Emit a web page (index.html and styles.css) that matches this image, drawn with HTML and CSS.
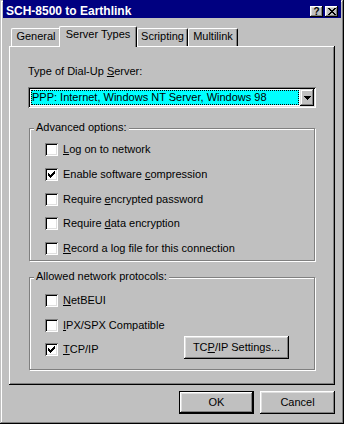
FILE: index.html
```html
<!DOCTYPE html>
<html lang="en">
<head>
  <meta charset="UTF-8">
  <meta name="viewport" content="width=device-width, initial-scale=1.0">
  <link rel="stylesheet" href="styles.css">
</head>
<body>
  <div class="window">
    <div class="titlebar">
      <span class="title">SCH-8500 to Earthlink</span>
      <div class="caption-buttons">
        <div class="cap-btn help">?</div>
        <div class="cap-btn close">
          <svg width="8" height="7" viewBox="0 0 8 7" shape-rendering="crispEdges">
            <path d="M0 0h2v1h-2z M6 0h2v1h-2z M1 1h2v1h-2z M5 1h2v1h-2z M2 2h4v1h-4z M3 3h2v1h-2z M2 4h4v1h-4z M1 5h2v1h-2z M5 5h2v1h-2z M0 6h2v1h-2z M6 6h2v1h-2z" fill="#000"/>
          </svg>
        </div>
      </div>
    </div>

    <div class="tabs">
      <div class="tab tab-general">General</div>
      <div class="tab tab-server active">Server Types</div>
      <div class="tab tab-scripting">Scripting</div>
      <div class="tab tab-multilink">Multilink</div>
    </div>

    <div class="panel">
      <div class="field-label">Type of Dial-Up <u>S</u>erver:</div>
      <div class="combo">
        <div class="combo-value">PPP: Internet, Windows NT Server, Windows 98</div>
        <div class="combo-arrow">
          <svg width="7" height="4" viewBox="0 0 7 4" shape-rendering="crispEdges">
            <path d="M0 0h7v1h-7z M1 1h5v1h-5z M2 2h3v1h-3z M3 3h1v1h-1z" fill="#000"/>
          </svg>
        </div>
      </div>

      <div class="group group-advanced">
        <span class="group-label">Advanced options:</span>
        <div class="check-row"><span class="check"></span><span><u>L</u>og on to network</span></div>
        <div class="check-row"><span class="check checked"></span><span>Enable software <u>c</u>ompression</span></div>
        <div class="check-row"><span class="check"></span><span>Require <u>e</u>ncrypted password</span></div>
        <div class="check-row"><span class="check"></span><span>Require <u>d</u>ata encryption</span></div>
        <div class="check-row"><span class="check"></span><span><u>R</u>ecord a log file for this connection</span></div>
      </div>

      <div class="group group-protocols">
        <span class="group-label">Allowed network protocols:</span>
        <div class="check-row"><span class="check"></span><span><u>N</u>etBEUI</span></div>
        <div class="check-row"><span class="check"></span><span><u>I</u>PX/SPX Compatible</span></div>
        <div class="check-row last">
          <span class="check checked"></span><span><u>T</u>CP/IP</span>
          <div class="btn btn-settings">TC<u>P</u>/IP Settings...</div>
        </div>
      </div>
    </div>

    <div class="buttons">
      <div class="btn btn-default">OK</div>
      <div class="btn">Cancel</div>
    </div>
  </div>
</body>
</html>
```

FILE: styles.css
```css
* {
  margin: 0;
  padding: 0;
  box-sizing: border-box;
}

body {
  width: 344px;
  height: 424px;
  background: #c0c0c0;
  font-family: "Liberation Sans", Arial, sans-serif;
  font-size: 11px;
  line-height: 13px;
  color: #000;
  overflow: hidden;
}

u {
  text-decoration: underline;
  text-underline-offset: 1px;
}

/* window frame, top edge is cut off by the capture */
.window {
  width: 344px;
  height: 424px;
  padding: 0 3px 3px 3px;
  box-shadow:
    inset -1px -1px 0 #000,
    inset 1px 1px 0 #c0c0c0,
    inset -2px -2px 0 #808080,
    inset 2px 2px 0 #fff;
}

.titlebar {
  height: 18px;
  background: #000080;
  color: #fff;
  display: flex;
  align-items: flex-start;
  padding: 4px 3px 0 3px;
}

.title {
  font-size: 12px;
  font-weight: bold;
  line-height: 14px;
  flex: 1;
}

.caption-buttons {
  display: flex;
  gap: 2px;
  margin-top: 2px;
}

.cap-btn {
  width: 13px;
  height: 11px;
  background: #c0c0c0;
  color: #000;
  display: flex;
  align-items: center;
  justify-content: center;
  font-size: 10px;
  font-weight: bold;
  line-height: 10px;
  box-shadow:
    inset -1px -1px 0 #000,
    inset 1px 1px 0 #fff,
    inset -2px -2px 0 #808080,
    inset 2px 2px 0 #dfdfdf;
}

.cap-btn svg {
  display: block;
}

/* tabs */
.tabs {
  display: flex;
  align-items: flex-end;
  height: 20px;
  margin-top: 8px;
  padding-left: 8px;
}

.tab {
  height: 18px;
  padding-top: 1px;
  text-align: center;
  background: #c0c0c0;
  border-top: 1px solid #fff;
  border-left: 1px solid #fff;
  border-right: 1px solid #000;
  border-radius: 2px 2px 0 0;
  box-shadow: inset -1px 0 0 #808080;
}

.tab-general { width: 50px; }
.tab-server { width: 78px; }
.tab-scripting { width: 51px; }
.tab-multilink { width: 50px; }

.tab.active {
  position: relative;
  z-index: 1;
  height: 21px;
  margin-left: -2px;
  margin-bottom: -1px;
}

.panel {
  width: 326px;
  height: 339px;
  margin-left: 6px;
  padding: 19px 19px 0 19px;
  box-shadow:
    inset -1px -1px 0 #000,
    inset 1px 1px 0 #fff,
    inset -2px -2px 0 #808080;
}

.field-label {
  height: 13px;
}

.combo {
  display: flex;
  width: 288px;
  height: 21px;
  margin-top: 9px;
  padding: 2px;
  background: #fff;
  box-shadow:
    inset 1px 1px 0 #808080,
    inset -1px -1px 0 #fff,
    inset 2px 2px 0 #000,
    inset -2px -2px 0 #dfdfdf;
}

.combo-value {
  flex: 1;
  margin: 1px 1px 1px 1px;
  padding-left: 0;
  background: #00ffff;
  border: 1px dotted #000;
  line-height: 13px;
  white-space: nowrap;
}

.combo-arrow {
  width: 14px;
  height: 17px;
  background: #c0c0c0;
  display: flex;
  align-items: center;
  justify-content: center;
  box-shadow:
    inset -1px -1px 0 #000,
    inset 1px 1px 0 #dfdfdf,
    inset -2px -2px 0 #808080,
    inset 2px 2px 0 #fff;
}

.combo-arrow svg {
  display: block;
}

/* group boxes */
.group {
  position: relative;
  width: 286px;
  margin-left: 1px;
  border: 1px solid #808080;
  box-shadow:
    1px 1px 0 #fff,
    inset 1px 1px 0 #fff;
  padding-left: 15px;
  display: flex;
  flex-direction: column;
}

.group-advanced {
  height: 133px;
  margin-top: 20px;
  padding-top: 14px;
  gap: 11.75px;
}

.group-protocols {
  height: 93px;
  margin-top: 16px;
  padding-top: 16px;
  gap: 11.5px;
}

.group-label {
  position: absolute;
  top: -8px;
  left: 4px;
  padding: 0 2px;
  background: #c0c0c0;
}

.check-row {
  display: flex;
  align-items: flex-start;
  gap: 4px;
  height: 13px;
  white-space: nowrap;
}

.check {
  position: relative;
  width: 13px;
  height: 13px;
  flex: none;
  margin-right: 1px;
  background: #fff;
  box-shadow:
    inset 1px 1px 0 #808080,
    inset -1px -1px 0 #fff,
    inset 2px 2px 0 #000,
    inset -2px -2px 0 #dfdfdf;
}

.check.checked {
  background: #fff url("data:image/svg+xml,%3Csvg xmlns='http://www.w3.org/2000/svg' width='7' height='7' shape-rendering='crispEdges'%3E%3Cpath d='M6 0h1v1h-1z M5 1h2v1h-2z M0 2h1v1h-1z M4 2h3v1h-3z M0 3h2v1h-2z M3 3h3v1h-3z M0 4h5v1h-5z M1 5h3v1h-3z M2 6h1v1h-1z' fill='%23000'/%3E%3C/svg%3E") no-repeat 3px 3px;
}

/* buttons */
.btn {
  width: 75px;
  height: 23px;
  display: flex;
  align-items: center;
  justify-content: center;
  background: #c0c0c0;
  box-shadow:
    inset -1px -1px 0 #000,
    inset 1px 1px 0 #fff,
    inset -2px -2px 0 #808080,
    inset 2px 2px 0 #dfdfdf;
}

.btn-default {
  box-shadow:
    inset 0 0 0 1px #000,
    inset -2px -2px 0 #000,
    inset 2px 2px 0 #fff,
    inset -3px -3px 0 #808080,
    inset 3px 3px 0 #dfdfdf;
}

.btn-settings {
  width: 105px;
  margin-top: -7px;
  margin-left: auto;
  margin-right: 25px;
  flex: none;
}

.buttons {
  display: flex;
  justify-content: flex-end;
  gap: 6px;
  width: 326px;
  margin: 6px 0 0 6px;
}
```
